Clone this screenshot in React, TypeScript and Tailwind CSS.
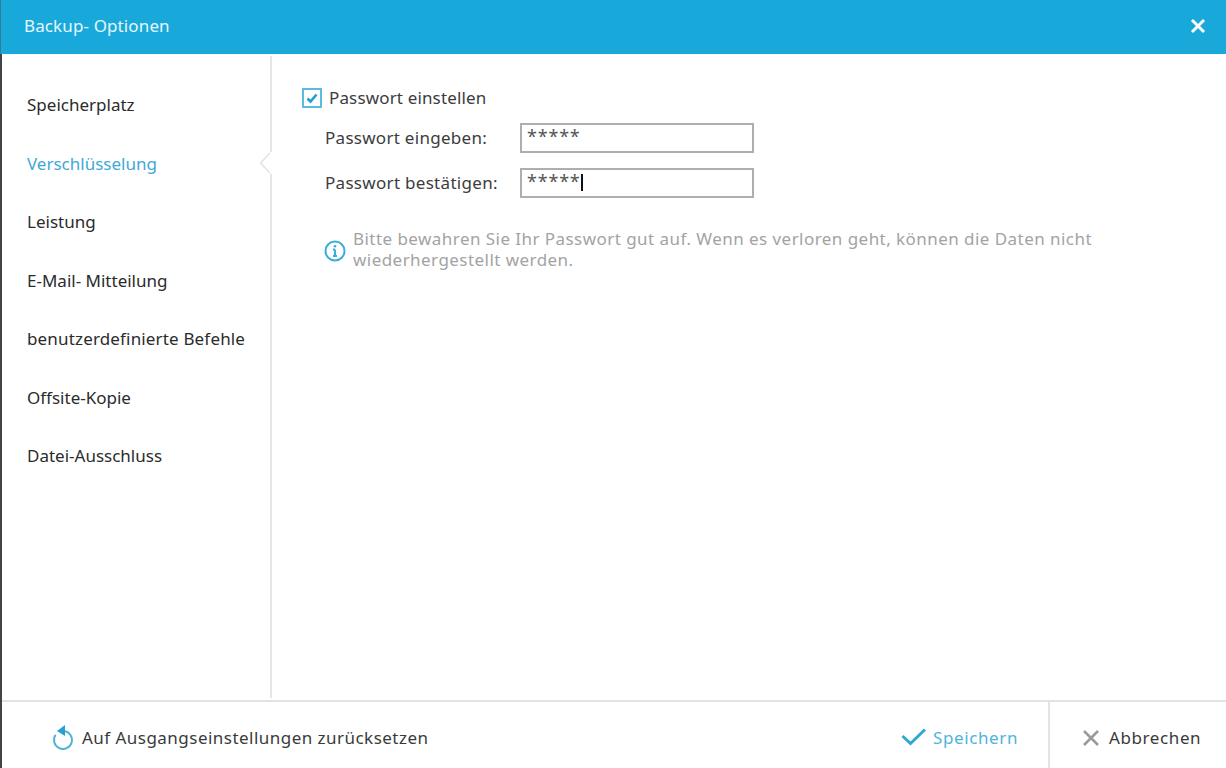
import React from "react";

const items = ["Speicherplatz", "Verschlüsselung", "Leistung", "E-Mail- Mitteilung", "benutzerdefinierte Befehle", "Offsite-Kopie", "Datei-Ausschluss"];

function Field({ label, tracking, caret }: { label: string; tracking: string; caret?: boolean }) {
  return (
    <div className="flex items-center h-[30px]">
      <div className={`w-[195px] text-[#3c3c3c] ${tracking}`}>{label}</div>
      <div className="w-[234px] h-[30px] border-2 border-[#a9afb3] bg-white flex items-start pl-[5px] pt-[1px] text-[#555] text-[18px] leading-[20px] tracking-[0.8px]">
        <span>*****</span>
        {caret && <span className="w-[2px] h-[17px] mt-[3px] bg-[#111]" />}
      </div>
    </div>
  );
}

export default function App() {
  return (
    <div className="w-[1226px] h-[768px] flex flex-col bg-white overflow-hidden text-[17px] font-['Noto_Sans',sans-serif]">
      <header className="h-[54px] shrink-0 bg-[#18a9da] border-l border-[#2f7f98] flex items-center justify-between pl-[23px] pr-[20px] pb-[2px] text-[#e6f7fc]">
        <span className="tracking-[0.12px]">Backup- Optionen</span>
        <svg width="16" height="16" viewBox="0 0 16 16" className="text-white">
          <path d="M2 2 14 14M14 2 2 14" stroke="currentColor" strokeWidth="3" />
        </svg>
      </header>
      <div className="flex-1 flex flex-col border-l-2 border-[#444]">
        <div className="flex-1 flex pt-[2px]">
          <aside className="relative w-[270px] shrink-0 mb-[2px] border-r-2 border-[#e6e6e6] pt-[19.5px] pl-[25px]">
            {items.map((t, i) => (
              <div key={t} className={`h-[58.5px] flex items-center ${i === 1 ? "text-[#3fa9d6]" : "text-[#2b2b2b]"} ${i === 4 ? "tracking-[0.16px]" : ""}`}>{t}</div>
            ))}
            <svg width="13" height="22" viewBox="0 0 13 22" className="absolute right-[-2px] top-[96px]">
              <path d="M12 0 1.5 11 12 22" fill="white" stroke="#e3e3e3" strokeWidth="1.5" />
              <path d="M12 0V22" stroke="white" strokeWidth="2" />
            </svg>
          </aside>
          <main className="flex-1 pl-[30px] pt-[30px]">
            <div className="flex items-center h-[24px] gap-[7px] text-[#3c3c3c]">
              <span className="w-[20px] h-[20px] border-2 border-[#5bbbdc] flex items-center justify-center">
                <svg width="14" height="14" viewBox="0 0 14 14">
                  <path d="M2.5 7.5 5.5 10.5 11.5 3.5" fill="none" stroke="#1d9fd0" strokeWidth="2.6" />
                </svg>
              </span>
              <span className="tracking-[0.15px]">Passwort einstellen</span>
            </div>
            <div className="pl-[23px] mt-[13px] flex flex-col gap-[15px]">
              <Field label="Passwort eingeben:" tracking="tracking-[0.28px]" />
              <Field label="Passwort bestätigen:" tracking="tracking-[0.3px]" caret />
            </div>
            <div className="pl-[22px] mt-[30px] flex items-center gap-[7px] text-[#a3a3a3] leading-[21px] tracking-[0.45px]">
              <svg width="22" height="22" viewBox="0 0 22 22" className="mt-[4px] shrink-0">
                <circle cx="11" cy="11" r="9.5" fill="none" stroke="#3aaed8" strokeWidth="2" />
                <path d="M11 9.5V16M9 9.5h2M9 16h4" stroke="#3aaed8" strokeWidth="2" fill="none" />
                <circle cx="11" cy="6.3" r="1.3" fill="#3aaed8" />
              </svg>
              <p className="w-[780px]">Bitte bewahren Sie Ihr Passwort gut auf. Wenn es verloren geht, können die Daten nicht wiederhergestellt werden.</p>
            </div>
          </main>
        </div>
        <footer className="h-[68px] shrink-0 border-t-2 border-[#e3e3e3] flex items-center text-[#3a3a3a]">
          <div className="flex items-center gap-[7px] pl-[49px] pt-[6px] flex-1">
            <svg width="24" height="26" viewBox="0 0 24 26">
              <path d="M13 6A9 9 0 1 1 4.6 9.8" fill="none" stroke="#4db4d8" strokeWidth="1.9" />
              <path d="M6 6 14 0V11Z" fill="#2a9fd0" />
            </svg>
            <span className="tracking-[0.47px]">Auf Ausgangseinstellungen zurücksetzen</span>
          </div>
          <div className="flex items-center gap-[7px] pr-[30px] pt-[6px] text-[#4fb4da]">
            <svg width="25" height="20" viewBox="0 0 25 20">
              <path d="M1.5 8 9.5 15.5 24 1.5" fill="none" stroke="#2ea7d4" strokeWidth="3" />
            </svg>
            <span className="tracking-[0.6px]">Speichern</span>
          </div>
          <div className="h-full w-[178px] border-l-2 border-[#e3e3e3] flex items-center gap-[9px] pl-[32px] pt-[6px]">
            <svg width="18" height="18" viewBox="0 0 18 18">
              <path d="M2 2 16 16M16 2 2 16" stroke="#9a9a9a" strokeWidth="2.6" />
            </svg>
            <span className="tracking-[0.6px]">Abbrechen</span>
          </div>
        </footer>
      </div>
    </div>
  );
}
